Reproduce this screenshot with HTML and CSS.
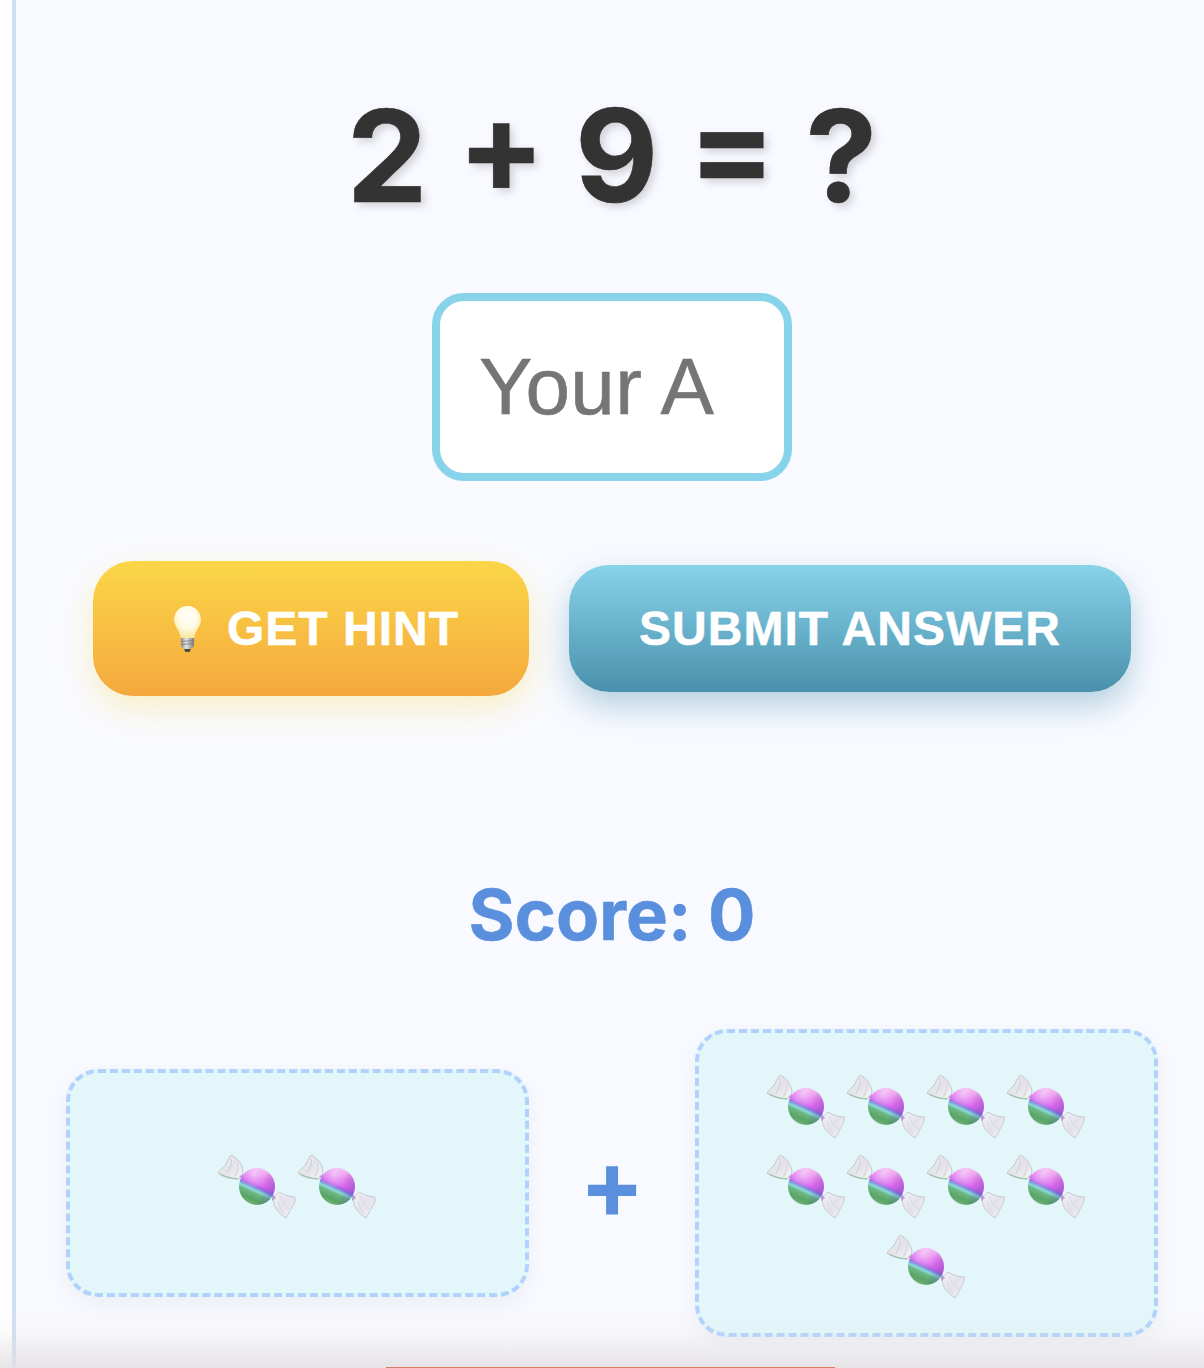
FILE: index.html
```html
<!DOCTYPE html>
<html lang="en">
<head>
<meta charset="utf-8">
<title>Math Candy Game</title>
<link rel="stylesheet" href="styles.css">
</head>
<body>
<svg class="defs" aria-hidden="true">
  <defs>
    <linearGradient id="ballFill" x1="0.7" y1="0.05" x2="0.3" y2="0.95">
      <stop offset="0" stop-color="#eeb0ee"/>
      <stop offset="0.2" stop-color="#e87cf0"/>
      <stop offset="0.44" stop-color="#d868ee"/>
      <stop offset="0.52" stop-color="#a06ce0"/>
      <stop offset="0.57" stop-color="#7aa8de"/>
      <stop offset="0.62" stop-color="#8cdcd8"/>
      <stop offset="0.7" stop-color="#6cb684"/>
      <stop offset="0.88" stop-color="#5aa364"/>
      <stop offset="1" stop-color="#72b27c"/>
    </linearGradient>
    <radialGradient id="ballShine" cx="0.42" cy="0.14" r="0.42">
      <stop offset="0" stop-color="#fff" stop-opacity="0.55"/>
      <stop offset="1" stop-color="#fff" stop-opacity="0"/>
    </radialGradient>
    <linearGradient id="ballShade" x1="0" y1="0" x2="1" y2="0.3">
      <stop offset="0.72" stop-color="#3c1f90" stop-opacity="0"/>
      <stop offset="1" stop-color="#3c1f90" stop-opacity="0.25"/>
    </linearGradient>
    <linearGradient id="wrapFill" x1="0" y1="0" x2="1" y2="1">
      <stop offset="0" stop-color="#f4f3f6"/>
      <stop offset="0.5" stop-color="#e2e2e8"/>
      <stop offset="1" stop-color="#f6f4f9"/>
    </linearGradient>
    <radialGradient id="bulbGlass" cx="0.5" cy="0.33" r="0.62">
      <stop offset="0" stop-color="#fffffa"/>
      <stop offset="0.55" stop-color="#fffbe6"/>
      <stop offset="1" stop-color="#f9e6a0"/>
    </radialGradient>
    <linearGradient id="bulbBase" x1="0" y1="0" x2="1" y2="0">
      <stop offset="0" stop-color="#8c8c8c"/>
      <stop offset="0.4" stop-color="#e4e4e4"/>
      <stop offset="1" stop-color="#7d7d7d"/>
    </linearGradient>
    <filter id="soft" x="-10%" y="-10%" width="120%" height="120%">
      <feGaussianBlur stdDeviation="0.6"/>
    </filter>
    <symbol id="candy" viewBox="0 0 80 64">
      <path d="M13 0C19 3 25 9 25 18L21 24C15 24 6 23 0 18C3 14 6 12 8 9C9 6 11 3 13 0Z" fill="url(#wrapFill)" stroke="#b4b2bc" stroke-width="0.7"/>
      <path d="M13 3C14 8 13 13 9 18M20 9C20 14 19 19 16 22" fill="none" stroke="#d4d3da" stroke-width="1.200"/>
      <path d="M2 19C8 22 13 23 20 24" fill="none" stroke="#8fc79a" stroke-width="1"/>
      <path d="M55 43L61 37C66 40 72 42 77 42C78 46 76 49 74 52C72 56 70 60 68 63C63 60 58 55 56 50Z" fill="url(#wrapFill)" stroke="#bdb6c6" stroke-width="0.7"/>
      <path d="M62 41C64 46 66 50 71 54M60 46C61 51 63 55 66 59" fill="none" stroke="#dddbe4" stroke-width="1.200"/>
      <path d="M21 22L25 19L26 25ZM54 38L58 43L54 46Z" fill="#b9a4cc"/>
      <ellipse cx="39" cy="31.500" rx="18" ry="18.500" fill="url(#ballFill)"/>
      <ellipse cx="39" cy="31.500" rx="18" ry="18.500" fill="url(#ballShine)"/>
      <ellipse cx="39" cy="31.500" rx="18" ry="18.500" fill="url(#ballShade)"/>
    </symbol>
    <symbol id="bulb" viewBox="0 0 36 46">
      <path d="M18.500 0C26 0 32 6 32 13.500C32 21 26 24 25 33H12C11 24 5 21 5 13.500C5 6 11 0 18.500 0Z" fill="url(#bulbGlass)" filter="url(#soft)"/>
      <path d="M12 32H25V40C24 42 22 43 18.500 43C15 43 13 42 12 40Z" fill="url(#bulbBase)"/>
      <path d="M15 43H22L20.500 46H16.500Z" fill="#4b4b4b"/>
      <path d="M12 35.500L25 34.500M12 38.500L25 37.500" stroke="#777" stroke-width="0.8"/>
    </symbol>
  </defs>
</svg>

<main class="game">
  <h1 class="equation">2 + 9 = ?</h1>

  <input class="answer" type="text" placeholder="Your A">

  <div class="actions">
    <button class="btn btn-hint" type="button">
      <svg class="bulb-icon" aria-hidden="true"><use href="#bulb"/></svg>
      <span>GET HINT</span>
    </button>
    <button class="btn btn-submit" type="button">SUBMIT ANSWER</button>
  </div>

  <div class="score">Score: 0</div>

  <section class="visual">
    <div class="tray tray-small">
      <span class="candy"><svg aria-hidden="true"><use href="#candy"/></svg></span>
      <span class="candy"><svg aria-hidden="true"><use href="#candy"/></svg></span>
    </div>
    <div class="operator">+</div>
    <div class="tray">
      <span class="candy"><svg aria-hidden="true"><use href="#candy"/></svg></span>
      <span class="candy"><svg aria-hidden="true"><use href="#candy"/></svg></span>
      <span class="candy"><svg aria-hidden="true"><use href="#candy"/></svg></span>
      <span class="candy"><svg aria-hidden="true"><use href="#candy"/></svg></span>
      <span class="candy"><svg aria-hidden="true"><use href="#candy"/></svg></span>
      <span class="candy"><svg aria-hidden="true"><use href="#candy"/></svg></span>
      <span class="candy"><svg aria-hidden="true"><use href="#candy"/></svg></span>
      <span class="candy"><svg aria-hidden="true"><use href="#candy"/></svg></span>
      <span class="candy"><svg aria-hidden="true"><use href="#candy"/></svg></span>
    </div>
  </section>

  <div class="fade"><div class="peek"></div></div>
</main>
</body>
</html>
```
FILE: styles.css
```css
* {
  box-sizing: border-box;
}

html,
body {
  height: 100%;
  margin: 0;
  overflow: hidden;
  background: #fff;
}

.defs {
  display: block;
  width: 0;
  height: 0;
}

.game {
  position: relative;
  height: 1368px;
  margin-left: 12px;
  padding: 92px 0 0 4px;
  border-left: 4px solid #cfdff2;
  background: #f9faff;
  display: flex;
  flex-direction: column;
  align-items: center;
  font-family: Inter, "Liberation Sans", sans-serif;
}

.equation {
  margin: 0;
  font-size: 128px;
  line-height: 128px;
  font-weight: 700;
  color: #333;
  -webkit-text-stroke: 0.6px #333;
  text-shadow: 4px 4px 8px rgba(0, 0, 0, 0.16);
}

.answer {
  display: block;
  width: 360px;
  height: 188px;
  margin-top: 73px;
  padding: 0 39px;
  border: 8px solid #87d3ea;
  border-radius: 32px;
  background: #fff;
  outline: none;
  font-family: "Liberation Sans", sans-serif;
  font-size: 80px;
  letter-spacing: 0.4px;
}

.answer::placeholder {
  color: #757575;
  opacity: 1;
  -webkit-text-stroke: 0.6px #757575;
}

.actions {
  display: flex;
  align-items: center;
  gap: 40px;
  margin-top: 80px;
}

.btn {
  display: flex;
  align-items: center;
  justify-content: center;
  border: none;
  border-radius: 40px;
  color: #fff;
  font-family: "Liberation Sans", sans-serif;
  font-size: 48px;
  font-weight: 700;
  letter-spacing: 1px;
  -webkit-text-stroke: 0.5px #fff;
}

.btn-hint {
  width: 436px;
  height: 135px;
  padding-left: 12px;
  gap: 22px;
  background: linear-gradient(#fad648, #f5a83c);
  box-shadow: 0 12px 32px rgba(250, 214, 72, 0.32);
}

.bulb-icon {
  width: 36px;
  height: 46px;
}

.btn-submit {
  width: 562px;
  height: 127px;
  background: linear-gradient(#87d3ea, #4a90ac);
  box-shadow: 0 14px 32px rgba(74, 144, 172, 0.4);
}

.score {
  margin-top: 183px;
  font-size: 70.4px;
  line-height: 72px;
  font-weight: 700;
  color: #5a8fdd;
  -webkit-text-stroke: 0.5px #5a8fdd;
}

.visual {
  display: flex;
  align-items: center;
  margin-top: 78px;
}

.tray {
  display: flex;
  flex-wrap: wrap;
  align-content: center;
  justify-content: center;
  width: 463px;
  padding: 30px 40px;
  border: 4px dashed #b0d2fc;
  border-radius: 32px;
  background: #e3f7fb;
  box-shadow: 0 8px 24px rgba(0, 0, 0, 0.05);
}

.tray-small {
  min-height: 228px;
}

.candy {
  display: flex;
  align-items: flex-end;
  width: 80px;
  height: 80px;
  padding-bottom: 4px;
}

.candy svg {
  width: 80px;
  height: 64px;
}

.operator {
  width: 166px;
  text-align: center;
  font-size: 96px;
  line-height: 96px;
  font-weight: 700;
  color: #5a8fdd;
}

.fade {
  position: absolute;
  left: -16px;
  right: 0;
  bottom: 0;
  height: 60px;
  background: linear-gradient(rgba(226, 222, 226, 0), rgba(226, 222, 226, 0.12) 40%, rgba(226, 222, 226, 0.8));
  display: flex;
  justify-content: center;
  align-items: flex-end;
}

.peek {
  width: 449px;
  height: 1px;
  margin-left: 16px;
  background: #d97b62;
}
```
